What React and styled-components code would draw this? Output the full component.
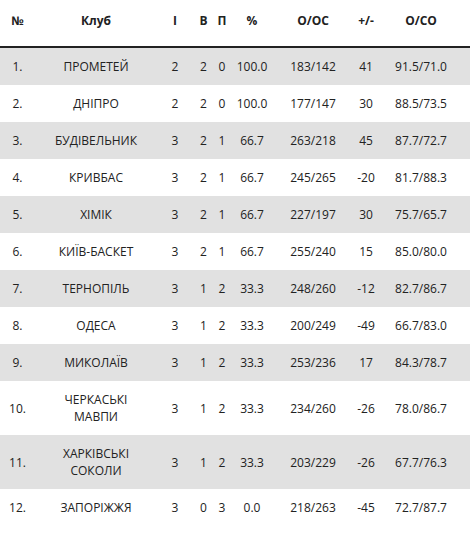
import React from "react";
import styled, { createGlobalStyle } from "styled-components";

const Global = createGlobalStyle`
  html, body { margin: 0; padding: 0; background: #fff; }
  body { font-family: "Open Sans", "Liberation Sans", sans-serif; font-size: 12px; color: #222; }
`;

const COLS = "35px 122px 36px 21px 16px 44px 78px 28px 82px 1fr";

const Table = styled.div`
  width: 470px;
  display: flex;
  flex-direction: column;
`;

const Row = styled.div`
  display: grid;
  grid-template-columns: ${COLS};
  align-items: center;
  background: ${(p) => (p.$shade ? "#e1e1e1" : "#fff")};
`;

const HeadRow = styled(Row)`
  border-bottom: 2px solid #222;
  font-weight: 700;
`;

const Cell = styled.div`
  text-align: center;
  line-height: 17px;
  padding: ${(p) => (p.$head ? "12px 0 17px" : "10px 0")};
  white-space: ${(p) => (p.$wrap ? "normal" : "nowrap")};
`;

const NameCell = styled(Cell)`
  padding-left: 6px;
  padding-right: 6px;
`;

const headers = ["№", "Клуб", "І", "В", "П", "%", "О/ОС", "+/-", "О/СО"];

const rows = [
  ["1.", "ПРОМЕТЕЙ", 2, 2, 0, "100.0", "183/142", "41", "91.5/71.0"],
  ["2.", "ДНІПРО", 2, 2, 0, "100.0", "177/147", "30", "88.5/73.5"],
  ["3.", "БУДІВЕЛЬНИК", 3, 2, 1, "66.7", "263/218", "45", "87.7/72.7"],
  ["4.", "КРИВБАС", 3, 2, 1, "66.7", "245/265", "-20", "81.7/88.3"],
  ["5.", "ХІМІК", 3, 2, 1, "66.7", "227/197", "30", "75.7/65.7"],
  ["6.", "КИЇВ-БАСКЕТ", 3, 2, 1, "66.7", "255/240", "15", "85.0/80.0"],
  ["7.", "ТЕРНОПІЛЬ", 3, 1, 2, "33.3", "248/260", "-12", "82.7/86.7"],
  ["8.", "ОДЕСА", 3, 1, 2, "33.3", "200/249", "-49", "66.7/83.0"],
  ["9.", "МИКОЛАЇВ", 3, 1, 2, "33.3", "253/236", "17", "84.3/78.7"],
  ["10.", "ЧЕРКАСЬКІ МАВПИ", 3, 1, 2, "33.3", "234/260", "-26", "78.0/86.7"],
  ["11.", "ХАРКІВСЬКІ СОКОЛИ", 3, 1, 2, "33.3", "203/229", "-26", "67.7/76.3"],
  ["12.", "ЗАПОРІЖЖЯ", 3, 0, 3, "0.0", "218/263", "-45", "72.7/87.7"],
];

export default function App() {
  return (
    <>
      <Global />
      <Table>
        <HeadRow>
          {headers.map((h) => (
            <Cell key={h} $head>
              {h}
            </Cell>
          ))}
          <div />
        </HeadRow>
        {rows.map((r, i) => (
          <Row key={r[0]} $shade={i % 2 === 0}>
            <Cell>{r[0]}</Cell>
            <NameCell $wrap>{r[1]}</NameCell>
            {r.slice(2).map((v, j) => (
              <Cell key={j}>{v}</Cell>
            ))}
            <div />
          </Row>
        ))}
      </Table>
    </>
  );
}
